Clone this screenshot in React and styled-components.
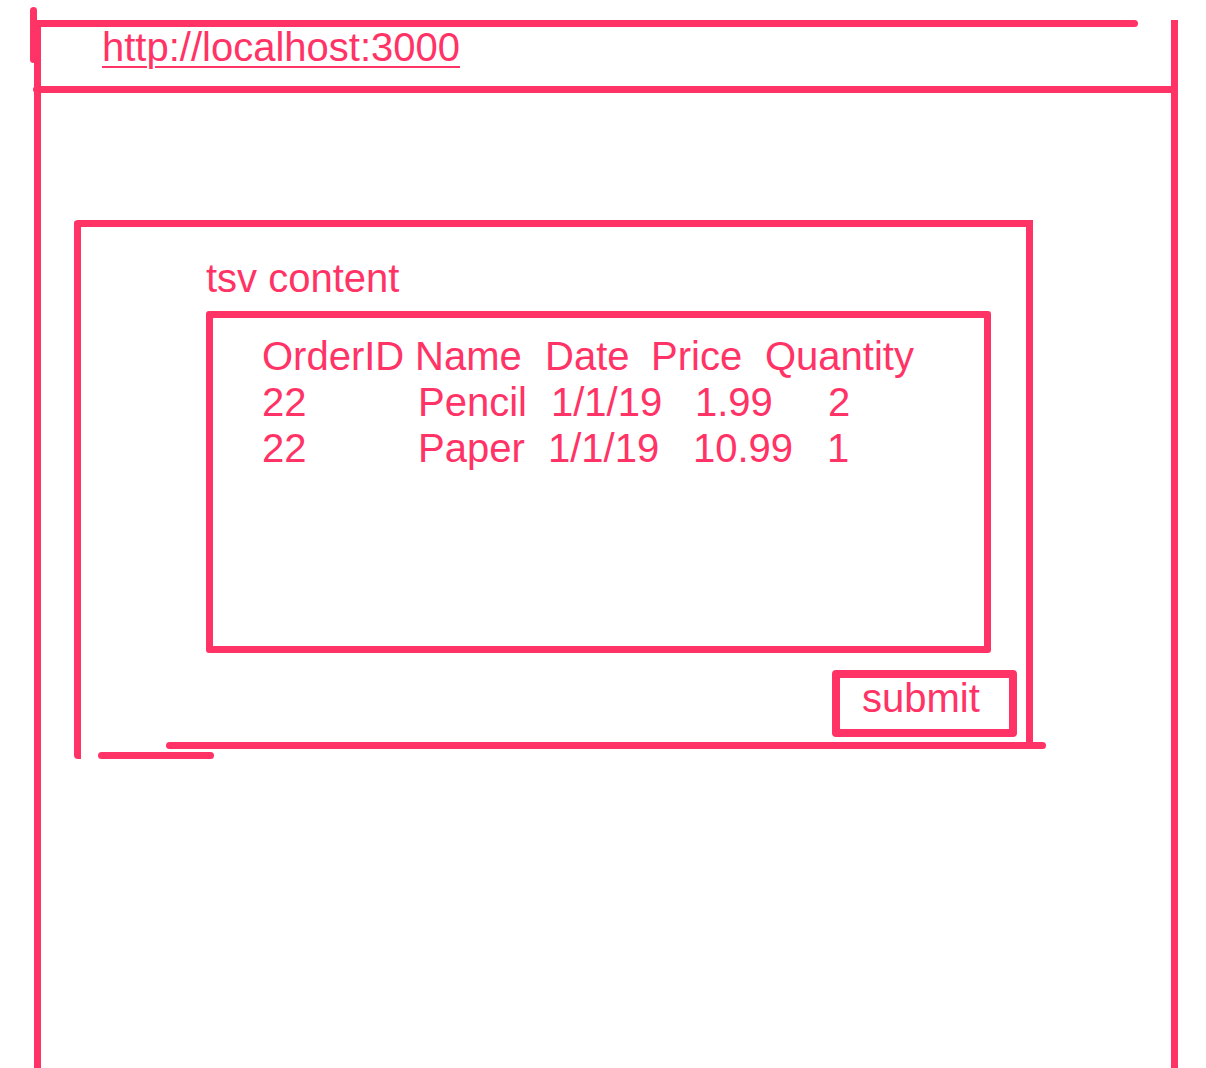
import React from 'react';
import styled, { createGlobalStyle } from 'styled-components';

const ink = '#ff3366';

const GlobalStyle = createGlobalStyle`
  html, body {
    margin: 0;
    padding: 0;
    background: #ffffff;
    overflow: hidden;
  }
  * {
    box-sizing: border-box;
  }
  body {
    font-family: "Liberation Sans", Helvetica, Arial, sans-serif;
    color: ${ink};
  }
`;

const rows = [
  { cols: '153px 130px 106px 114px auto', cells: ['OrderID', 'Name', 'Date', 'Price', 'Quantity'] },
  { cols: '156px 133px 144px 133px auto', cells: ['22', 'Pencil', '1/1/19', '1.99', '2'] },
  { cols: '156px 130px 145px 134px auto', cells: ['22', 'Paper', '1/1/19', '10.99', '1'] },
];

export default function App() {
  return (
    <>
      <GlobalStyle />
      <Browser>
        <TopRule />
        <UrlBar>
          <Url href="http://localhost:3000">http://localhost:3000</Url>
        </UrlBar>
        <BarRule />
        <Panel>
          <Body>
            <Label htmlFor="tsv">tsv content</Label>
            <TsvBox id="tsv" role="textbox" aria-multiline="true">
              {rows.map((row, i) => (
                <Row key={i} $cols={row.cols}>
                  {row.cells.map((cell, j) => (
                    <span key={j}>{cell}</span>
                  ))}
                </Row>
              ))}
            </TsvBox>
            <Actions>
              <Submit type="button">submit</Submit>
            </Actions>
          </Body>
          <BottomEdge />
          <Stray />
        </Panel>
      </Browser>
    </>
  );
}

const Browser = styled.div`
  position: relative;
  margin: 20px 0 0 34px;
  width: 1144px;
  height: 1048px;
  border-left: 7px solid ${ink};
  border-right: 7px solid ${ink};

  &::before {
    content: '';
    position: absolute;
    left: -11px;
    top: -13px;
    width: 7px;
    height: 56px;
    border-radius: 4px;
    background: ${ink};
  }
`;

const TopRule = styled.div`
  height: 7px;
  width: 1108px;
  margin-left: -11px;
  border-radius: 4px;
  background: ${ink};
`;

const UrlBar = styled.div`
  height: 59px;
  display: flex;
  align-items: flex-start;
  padding: 3px 0 0 61px;
  font-size: 40px;
  line-height: 34px;
`;

const Url = styled.a`
  color: ${ink};
  text-decoration: underline;
  text-decoration-thickness: 2px;
  text-underline-offset: 5px;
`;

const BarRule = styled.div`
  height: 7px;
  margin: 0 -7px 0 -8px;
  border-radius: 4px 0 0 4px;
  background: ${ink};
`;

const Panel = styled.section`
  margin: 127px 0 0 33px;
  width: 959px;
  border-top: 7px solid ${ink};
  border-left: 7px solid ${ink};
  border-radius: 4px 0 0 4px;
`;

const Body = styled.div`
  height: 515px;
  display: flex;
  flex-direction: column;
  align-items: flex-start;
  padding: 28px 9px 0 125px;
  border-right: 7px solid ${ink};
`;

const Label = styled.label`
  display: block;
  font-size: 40px;
  line-height: 46px;
  margin-bottom: 10px;
`;

const TsvBox = styled.div`
  width: 785px;
  height: 342px;
  border: 7px solid ${ink};
  border-radius: 3px;
  padding: 15px 0 0 49px;
  font-size: 40px;
  line-height: 46px;
`;

const Row = styled.div`
  display: grid;
  grid-template-columns: ${(p) => p.$cols};
  white-space: nowrap;
`;

const Actions = styled.div`
  align-self: stretch;
  display: flex;
  justify-content: flex-end;
  margin-top: 17px;
`;

const Submit = styled.button`
  width: 185px;
  height: 67px;
  border: 8px solid ${ink};
  border-radius: 4px;
  background: #ffffff;
  color: ${ink};
  font-family: "Liberation Sans", Helvetica, Arial, sans-serif;
  font-size: 40px;
  line-height: 40px;
  text-align: left;
  padding: 0 0 11px 22px;
  cursor: pointer;
`;

const BottomEdge = styled.div`
  height: 7px;
  width: 880px;
  margin-left: 85px;
  border-radius: 4px;
  background: ${ink};
`;

const Stray = styled.div`
  height: 7px;
  width: 116px;
  margin: 3px 0 0 17px;
  border-radius: 4px;
  background: ${ink};
`;
